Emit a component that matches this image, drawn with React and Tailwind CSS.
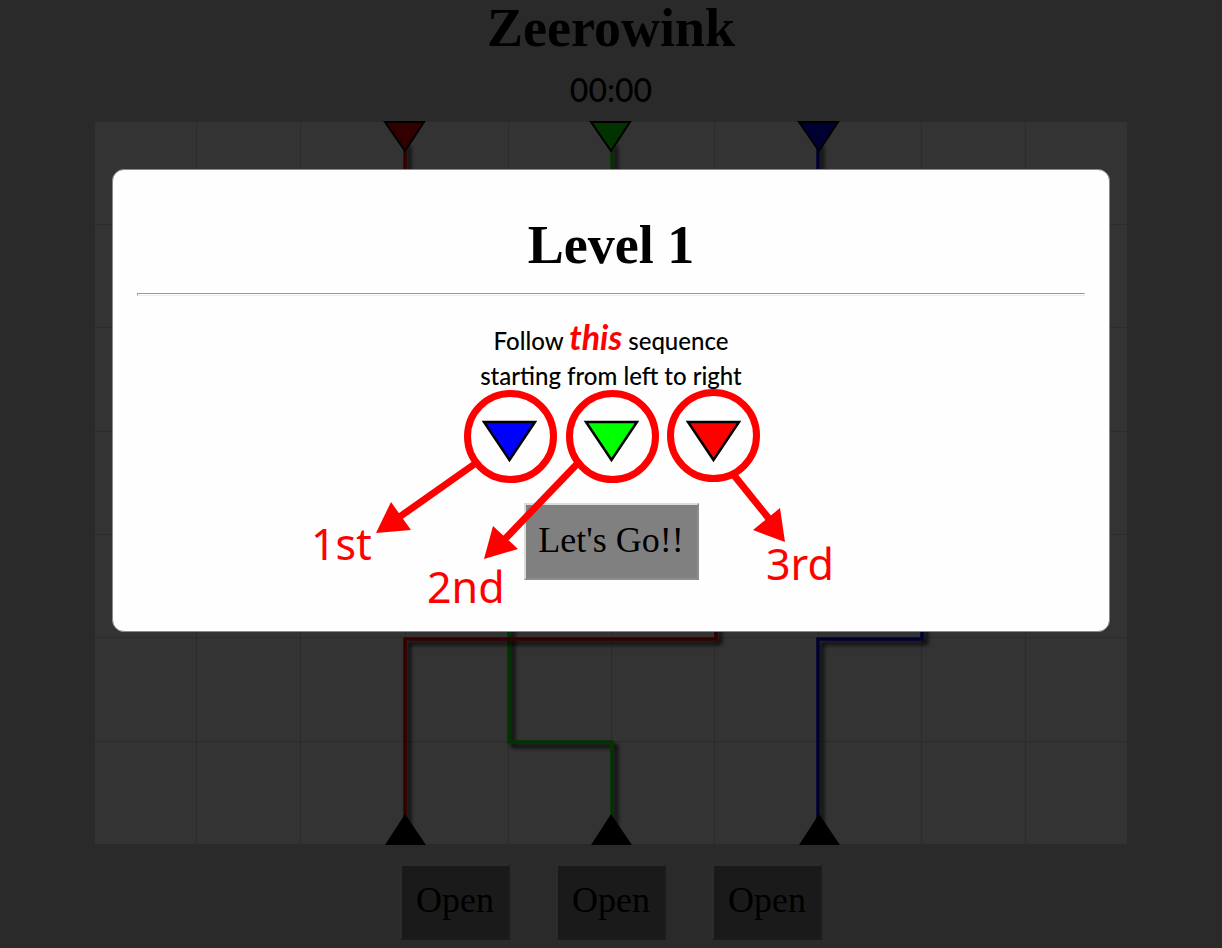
const COLUMNS = [101, 205, 310, 413, 516, 619, 723, 826, 930];
const ROWS = [102, 205, 309, 412, 515, 619];

const PIPES = [
  { color: '#0f0', d: 'M517 20 V205 H414 V620 H517 V700' },
  { color: '#f00', d: 'M310 20 V309 H621 V517 H310 V702' },
  { color: '#00f', d: 'M723 20 V412 H827 V517 H723 V702' },
];

const FUNNELS = [
  { color: '#f00', x: 310 },
  { color: '#0f0', x: 516 },
  { color: '#00f', x: 724 },
];

const SEQUENCE = [
  { name: 'Blue', color: '#00f' },
  { name: 'Green', color: '#0f0' },
  { name: 'Red', color: '#f00' },
];

function Board() {
  return (
    <svg viewBox="0 0 1032 722" className="block w-full overflow-visible bg-white" role="img" aria-label="Pipe board">
      <defs>
        <filter id="pipe-shadow" filterUnits="userSpaceOnUse" x="0" y="0" width="1032" height="722">
          <feDropShadow dx="4" dy="4" stdDeviation="2" floodColor="#000" floodOpacity="0.9" />
        </filter>
      </defs>
      <g stroke="#d6d6d6" strokeWidth="1">
        {COLUMNS.map((x) => (
          <line key={x} x1={x + 0.5} y1="0" x2={x + 0.5} y2="722" />
        ))}
        {ROWS.map((y) => (
          <line key={y} x1="0" y1={y + 0.5} x2="1032" y2={y + 0.5} />
        ))}
      </g>
      {PIPES.map((pipe) => (
        <path key={pipe.color} d={pipe.d} fill="none" stroke={pipe.color} strokeWidth="3.500" filter="url(#pipe-shadow)" />
      ))}
      {FUNNELS.map(({ color, x }) => (
        <g key={color}>
          <path d={`M${x - 20} 0 H${x + 19} L${x} 29 Z`} fill={color} stroke="#000" strokeWidth="2" />
          <path d={`M${x - 20} 723 L${x} 692 L${x + 21} 723 Z`} fill="#000" />
        </g>
      ))}
    </svg>
  );
}

function Annotations() {
  return (
    <svg
      viewBox="0 0 998 463"
      className="pointer-events-none absolute top-0 left-1/2 h-[463px] w-[998px] -translate-x-1/2"
      aria-hidden="true"
    >
      <g fill="none" stroke="#f00" strokeWidth="7">
        <circle cx="398.500" cy="266.500" r="43" />
        <circle cx="500.500" cy="266.500" r="43" />
        <circle cx="601.500" cy="265.500" r="43" />
        <path d="M364 293 L286 348" />
        <path d="M466 293 L392 370" />
        <path d="M621 304 L658 350" />
      </g>
      <g fill="#f00">
        <path d="M264 363 L279 332 L299 360 Z" />
        <path d="M372 389 L381 356 L406 379 Z" />
        <path d="M673 372 L668 338 L641 360 Z" />
        <g fontFamily="'Noto Sans', sans-serif" fontSize="43">
          <text x="199" y="390">1st</text>
          <text x="315" y="433">2nd</text>
          <text x="654" y="410">3rd</text>
        </g>
      </g>
    </svg>
  );
}

function GameButton({ children, className }) {
  return (
    <button
      type="button"
      className={`border-2 border-t-[#dcdcdc] border-l-[#dcdcdc] border-r-[#8c8c8c] border-b-[#8c8c8c] bg-[#808080] pb-1 font-['Liberation_Serif',serif] text-4xl text-black ${className}`}
    >
      {children}
    </button>
  );
}

function LevelDialog() {
  return (
    <div className="fixed inset-0 overflow-auto bg-black/80 px-28 pt-[169px]">
      <section
        role="dialog"
        aria-modal="true"
        aria-labelledby="level-title"
        className="relative flex flex-col items-center rounded-xl border border-[#888] bg-[#fefefe] px-6 pt-[39px] pb-[51px]"
      >
        <h2 id="level-title" className="font-['Liberation_Serif',serif] text-[54px] leading-[72px] font-bold">
          Level 1
        </h2>
        <hr className="mt-3 h-[3px] w-full border border-t-[#999] border-r-[#eee] border-b-[#eee] border-l-[#999]" />
        <p className="mt-[23px] text-center font-[Lato,sans-serif] text-2xl leading-[35px] font-medium text-black">
          Follow <em className="text-[34px] font-bold text-[#f00]">this</em> sequence
          <br />
          starting from left to right
        </p>
        <div className="mt-[27px] flex gap-[46px]">
          {SEQUENCE.map(({ name, color }) => (
            <svg key={name} viewBox="0 0 56 42" className="h-[42px] w-14" role="img" aria-label={name}>
              <path d="M3 2 H54 L28.500 40 Z" fill={color} stroke="#000" strokeWidth="2.500" />
            </svg>
          ))}
        </div>
        <GameButton className="mt-[41px] h-[77px] w-[175px]">Let&apos;s Go!!</GameButton>
        <Annotations />
      </section>
    </div>
  );
}

export default function App() {
  return (
    <div className="min-h-screen bg-[#d3d3d3] text-black">
      <main className="flex flex-col items-center px-[95px] pb-2">
        <h1 className="font-['Liberation_Serif',serif] text-[54px] leading-[56px] font-bold">Zeerowink</h1>
        <time className="mt-[10px] mb-2 font-[Lato,sans-serif] text-[32px] leading-[48px] font-medium">00:00</time>
        <Board />
        <div className="mt-5 flex gap-[46px]">
          <GameButton className="h-[76px] w-[110px]">Open</GameButton>
          <GameButton className="h-[76px] w-[110px]">Open</GameButton>
          <GameButton className="h-[76px] w-[110px]">Open</GameButton>
        </div>
      </main>
      <LevelDialog />
    </div>
  );
}
